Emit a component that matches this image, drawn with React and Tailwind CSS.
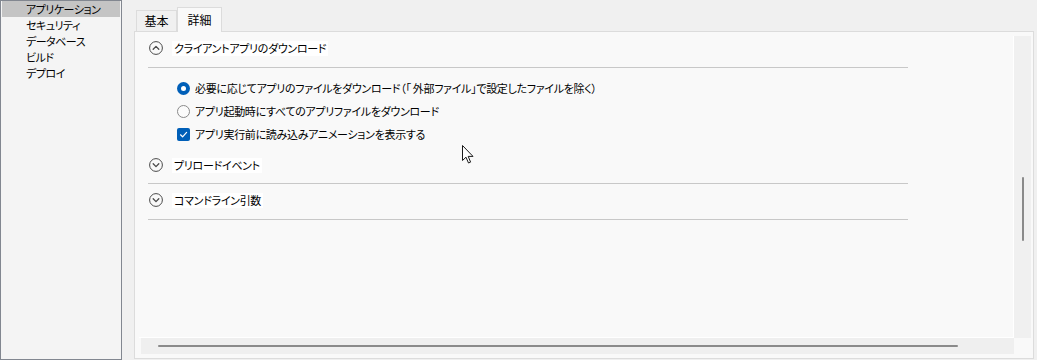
import React from "react";

const font = "font-['Noto_Sans_CJK_JP','Noto_Sans',sans-serif] [font-feature-settings:'palt']";

function CircleChevron({ up }) {
  return (
    <svg width="14" height="14" viewBox="0 0 14 14" fill="none" stroke="#4a4a4a" strokeWidth="1">
      <circle cx="7" cy="7" r="6.4" />
      {up ? (
        <path d="M4.2 8.3 L7 5.4 L9.8 8.3" strokeWidth="1.3" strokeLinecap="round" strokeLinejoin="round" />
      ) : (
        <path d="M4.2 5.7 L7 8.6 L9.8 5.7" strokeWidth="1.3" strokeLinecap="round" strokeLinejoin="round" />
      )}
    </svg>
  );
}

function SectionHeader({ up, children }) {
  return (
    <div className="flex h-4 items-center pl-[10px]">
      <CircleChevron up={up} />
      <span className="ml-[9px] bg-white px-[2px] text-[11px] leading-[15px] tracking-[-0.3px] text-black">{children}</span>
    </div>
  );
}

function Divider() {
  return <div className="ml-[9px] h-px w-[760px] bg-[#c8c8c8]" />;
}

function Radio({ checked }) {
  if (checked) {
    return (
      <span className="flex h-[13px] w-[13px] items-center justify-center rounded-full bg-[#005fb8]">
        <span className="h-[5px] w-[5px] rounded-full bg-white" />
      </span>
    );
  }
  return <span className="h-[13px] w-[13px] rounded-full border border-[#8a8a8a] bg-[#fbfbfb]" />;
}

function Checkbox() {
  return (
    <span className="flex h-[13px] w-[13px] items-center justify-center rounded-[2px] bg-[#005fb8]">
      <svg width="9" height="9" viewBox="0 0 9 9" fill="none" stroke="white" strokeWidth="1.2">
        <path d="M1.5 4.8 L3.6 6.8 L7.6 2.4" strokeLinecap="round" strokeLinejoin="round" />
      </svg>
    </span>
  );
}

function Option({ control, children }) {
  return (
    <div className="flex h-[23px] items-center gap-[5px] pl-[38px]">
      {control}
      <span className="text-[11px] leading-[15px] tracking-[-0.3px] text-black">{children}</span>
    </div>
  );
}

export default function App() {
  const items = ["アプリケーション", "セキュリティ", "データベース", "ビルド", "デプロイ"];

  return (
    <div className={`relative flex h-[360px] w-[1037px] bg-[#f0f0f0] ${font}`}>
      {/* NAV */}
      <aside className="h-[360px] w-[122px] border border-[#828790] bg-[#f4f4f4] px-px">
        {items.map((item, i) => (
          <div
            key={item}
            className={`flex h-4 items-center pl-[24px] text-[11px] tracking-[-0.5px] text-black ${i === 0 ? "bg-[#c4c4c4]" : ""}`}
          >
            {item}
          </div>
        ))}
      </aside>

      {/* TABS + PANEL */}
      <main className="ml-3 flex w-[900px] flex-col pt-[6px]">
        <div className="flex h-[25px] items-end pl-[2px]">
          <div className="flex h-[21px] w-[41px] items-center justify-center border border-b-0 border-[#dcdcdc] bg-[#f0f0f0] text-[12px] text-black">
            基本
          </div>
          <div className="relative z-10 -mb-px flex h-[25px] w-[45px] items-start justify-center border border-b-0 border-[#dcdcdc] bg-[#f9f9f9] pt-[3px] text-[12px] text-black">
            詳細
          </div>
        </div>

        <div className="flex h-[328px] flex-col border border-[#dcdcdc] bg-[#f9f9f9] pb-[3px] pl-[4px] pr-[2px] pt-[4px]">
          <div className="flex h-[302px]">
            {/* VIEWPORT */}
            <div className="flex-1 border-b border-r border-white pt-[4px]">
              <SectionHeader up>クライアントアプリのダウンロード</SectionHeader>
              <div className="mt-[11px]">
                <Divider />
              </div>
              <div className="mt-[9px]">
                <Option control={<Radio checked />}>
                  必要に応じてアプリのファイルをダウンロード（「 外部ファイル」で設定したファイルを除く）
                </Option>
                <Option control={<Radio />}>アプリ起動時にすべてのアプリファイルをダウンロード</Option>
                <Option control={<Checkbox />}>アプリ実行前に読み込みアニメーションを表示する</Option>
              </div>
              <div className="mt-[11px]">
                <SectionHeader>プリロードイベント</SectionHeader>
              </div>
              <div className="mt-[10px]">
                <Divider />
              </div>
              <div className="mt-[8px]">
                <SectionHeader>コマンドライン引数</SectionHeader>
              </div>
              <div className="mt-[11px]">
                <Divider />
              </div>
            </div>

            {/* V SCROLL */}
            <div className="flex w-[17px] justify-center bg-[#f0f0f0] pt-[141px]">
              <div className="h-[64px] w-[2px] rounded-full bg-[#8a8a8a]" />
            </div>
          </div>

          {/* H SCROLL */}
          <div className="mr-[17px] ml-[2px] flex h-[16px] items-center bg-[#efefef] pl-[17px]">
            <div className="h-[2px] w-[800px] rounded-full bg-[#8a8a8a]" />
          </div>
        </div>
      </main>

      {/* CURSOR */}
      <svg className="absolute left-[462px] top-[145px]" width="13" height="20" viewBox="0 0 13 20">
        <path d="M0.5 0.5 L0.5 15.5 L4 12.2 L6.5 18 L8.6 17.1 L6.2 11.4 L11 11.4 Z" fill="white" stroke="#1a1a1a" strokeWidth="1" strokeLinejoin="round" />
      </svg>
    </div>
  );
}
